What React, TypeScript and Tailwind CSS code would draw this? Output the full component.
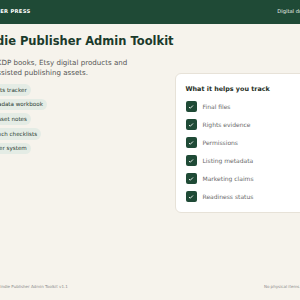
import React from 'react';

const pills = ['Rights tracker', 'Metadata workbook', 'AI asset notes', 'Launch checklists', 'Folder system'];

const tracked = [
  'Final files',
  'Rights evidence',
  'Permissions',
  'Listing metadata',
  'Marketing claims',
  'Readiness status',
];

const CheckBox: React.FC = () => (
  <span className="w-[11px] h-[11px] rounded-[2px] bg-[#1f4a36] flex items-center justify-center shrink-0">
    <svg className="w-[6px] h-[6px]" viewBox="0 0 24 24" fill="none" stroke="white" strokeWidth="3.5" strokeLinecap="round" strokeLinejoin="round">
      <path d="M5 13l4 4L19 7" />
    </svg>
  </span>
);

export default function App() {
  return (
    <div className="h-screen w-full overflow-hidden bg-[#f6f3ec] font-['DejaVu_Sans',sans-serif] flex flex-col">
      {/* Header */}
      <header className="h-[24px] bg-[#1f4a36] flex justify-center shrink-0">
        <div className="w-[333px] shrink-0 flex items-center justify-between">
          <span className="text-[5.2px] font-bold tracking-[0.06em] text-white">LEDGER PRESS</span>
          <span className="text-[5.2px] text-[#e8efe9] -mr-[7px]">Digital downloads</span>
        </div>
      </header>

      {/* Main */}
      <main className="flex justify-center">
        <div className="w-[333px] shrink-0 pt-[10px]">
          <h1 className="text-[11.5px] leading-[14px] font-bold text-[#1b3a2b]">Indie Publisher Admin Toolkit</h1>

          <div className="flex items-start gap-[13px] mt-[10px]">
            <div className="flex-1">
              <p className="w-[155px] text-[7.1px] leading-[10px] text-[#555]">
                For KDP books, Etsy digital products and AI-assisted publishing assets.
              </p>
              <div className="flex flex-col items-start gap-[3.2px] mt-[6px]">
                {pills.map((p) => (
                  <span
                    key={p}
                    className="h-[11.5px] px-[4px] rounded-full bg-[#e4ece5] text-[5.6px] text-[#2b3b30] flex items-center"
                  >
                    {p}
                  </span>
                ))}
              </div>
            </div>

            <div className="w-[142px] shrink-0 mt-[15px] bg-white border border-[#e7e2d8] rounded-[6px] px-[10px] pt-[11px] pb-[10px]">
              <h2 className="text-[6.4px] leading-[8px] font-bold text-[#1e2e24]">What it helps you track</h2>
              <ul className="flex flex-col gap-[7px] mt-[8px]">
                {tracked.map((t) => (
                  <li key={t} className="flex items-center gap-[6px]">
                    <CheckBox />
                    <span className="text-[6px] text-[#6a6a6a]">{t}</span>
                  </li>
                ))}
              </ul>
            </div>
          </div>
        </div>
      </main>

      {/* Footer */}
      <footer className="mt-auto flex justify-center">
        <div className="w-[333px] shrink-0 py-[10px] flex items-center justify-between text-[4px] leading-[6px] text-[#8a8a8a]">
          <span>© 2025 Indie Publisher Admin Toolkit v1.1</span>
          <span>No physical items shipped</span>
        </div>
      </footer>
    </div>
  );
}
